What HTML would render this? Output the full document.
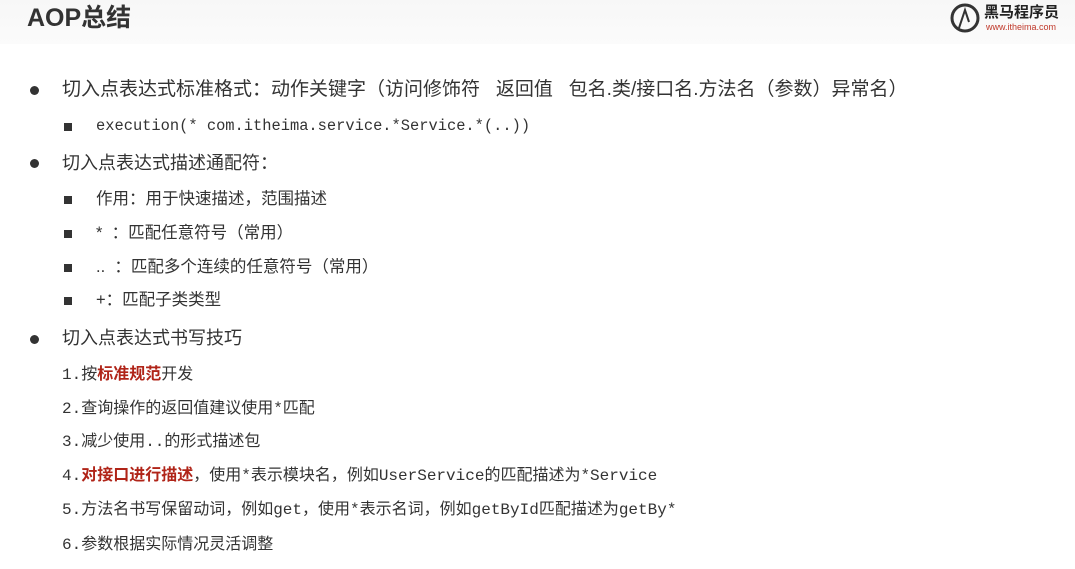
<!DOCTYPE html>
<html><head><meta charset="utf-8"><style>
body{margin:0;width:1075px;height:569px;background:#fff;position:relative;overflow:hidden;font-family:"Liberation Sans","Noto Sans CJK SC",sans-serif;color:#333}
.hdr{position:absolute;left:0;top:0;width:1075px;height:44px;background:linear-gradient(#f7f7f7,#fbfbfb)}
.t{position:absolute;white-space:nowrap;line-height:1}
.mono{font-family:"Liberation Mono","Noto Sans CJK SC",monospace}
.dot{position:absolute;width:9px;height:9px;border-radius:50%;background:#333}
.sq{position:absolute;width:8px;height:8px;background:#333}
.red{color:#b02418;font-weight:bold}
</style></head><body>
<div class="hdr"></div>
<div class="t" style="left:27px;top:6px;font-size:25px;font-weight:bold;color:#333">AOP总结</div>
<svg style="position:absolute;left:949px;top:2px" width="34" height="32" viewBox="0 0 34 32"><circle cx="16" cy="16" r="13" fill="none" stroke="#333" stroke-width="3"/><path d="M10 26 L16 8 L20 20" stroke="#333" stroke-width="2" fill="none"/></svg>
<div class="t" style="left:984px;top:5px;font-size:15px;font-weight:bold;color:#222">黑马程序员</div>
<div class="t" style="left:986px;top:23px;font-size:9px;color:#c0392b">www.itheima.com</div>

<div class="dot" style="left:30px;top:86px"></div>
<div class="t" style="left:62px;top:80px;font-size:19px">切入点表达式标准格式：动作关键字（访问修饰符&nbsp;&nbsp;&nbsp;返回值&nbsp;&nbsp;&nbsp;包名.类/接口名.方法名（参数）异常名）</div>
<div class="sq" style="left:64px;top:123px"></div>
<div class="t mono" style="left:96px;top:119px;font-size:15.4px">execution(* com.itheima.service.*Service.*(..))</div>
<div class="dot" style="left:30px;top:159px"></div>
<div class="t" style="left:62px;top:154px;font-size:18px">切入点表达式描述通配符：</div>
<div class="sq" style="left:64px;top:196px"></div>
<div class="t" style="left:96px;top:191px;font-size:16.5px">作用：用于快速描述，范围描述</div>
<div class="sq" style="left:64px;top:230px"></div>
<div class="t" style="left:96px;top:225px;font-size:16.5px">*&nbsp;&nbsp;：匹配任意符号（常用）</div>
<div class="sq" style="left:64px;top:264px"></div>
<div class="t" style="left:96px;top:259px;font-size:16.5px">..&nbsp;&nbsp;：匹配多个连续的任意符号（常用）</div>
<div class="sq" style="left:64px;top:297px"></div>
<div class="t" style="left:96px;top:292px;font-size:16.5px">+：匹配子类类型</div>
<div class="dot" style="left:30px;top:335px"></div>
<div class="t" style="left:62px;top:329px;font-size:18px">切入点表达式书写技巧</div>
<div class="t mono" style="left:62px;top:367px;font-size:16px">1.按<span class="red">标准规范</span>开发</div>
<div class="t mono" style="left:62px;top:401px;font-size:16px">2.查询操作的返回值建议使用*匹配</div>
<div class="t mono" style="left:62px;top:434px;font-size:16px">3.减少使用..的形式描述包</div>
<div class="t mono" style="left:62px;top:468px;font-size:16px">4.<span class="red">对接口进行描述</span>，使用*表示模块名，例如UserService的匹配描述为*Service</div>
<div class="t mono" style="left:62px;top:502px;font-size:16px">5.方法名书写保留动词，例如get，使用*表示名词，例如getById匹配描述为getBy*</div>
<div class="t mono" style="left:62px;top:537px;font-size:16px">6.参数根据实际情况灵活调整</div>
</body></html>
